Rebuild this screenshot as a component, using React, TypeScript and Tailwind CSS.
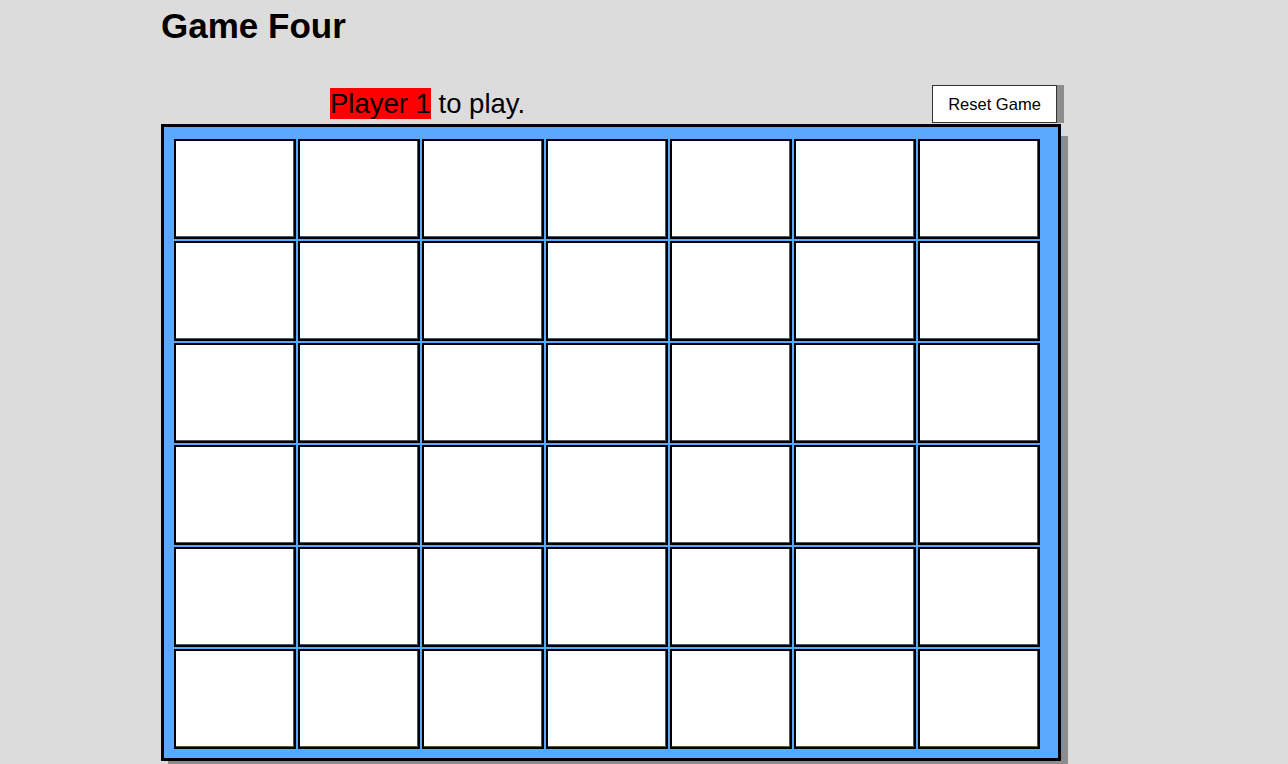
import { useState } from "react";

const ROWS = 6;
const COLS = 7;

export default function App() {
  const [player] = useState(1);
  const cells = Array.from({ length: ROWS * COLS }, (_, i) => i);

  return (
    <div className="min-h-screen bg-[#dcdcdc] font-['Liberation_Sans',Arial,sans-serif] text-black">
      <div className="ml-[161px] w-[900px]">
        <h1 className="pt-[6px] text-[35px] font-bold leading-[40px]">Game Four</h1>

        <div className="mt-[39px] flex h-[39px] items-start">
          <p className="ml-[169px] mt-[3px] text-[27.5px] leading-[31px]">
            <span className="bg-[#ff0000]">Player {player}</span> to play.
          </p>
          <button
            type="button"
            className="ml-auto mr-[4px] h-[38px] w-[125px] border border-[#333] bg-white text-[16.5px] text-black shadow-[7px_0_0_#8c8c8c]"
          >
            Reset Game
          </button>
        </div>

        <div className="w-[900px] border-[3px] border-black bg-[#58a9ff] pb-[9px] pl-[10px] pt-[12px] shadow-[7px_12px_0_#8c8c8c]">
          <div className="grid grid-cols-[repeat(7,122px)] grid-rows-[repeat(6,100px)] gap-[2px]">
            {cells.map((c) => (
              <div key={c} className="border-2 border-black bg-white shadow-[inset_-1px_-1px_0_#555]" />
            ))}
          </div>
        </div>
      </div>
    </div>
  );
}
